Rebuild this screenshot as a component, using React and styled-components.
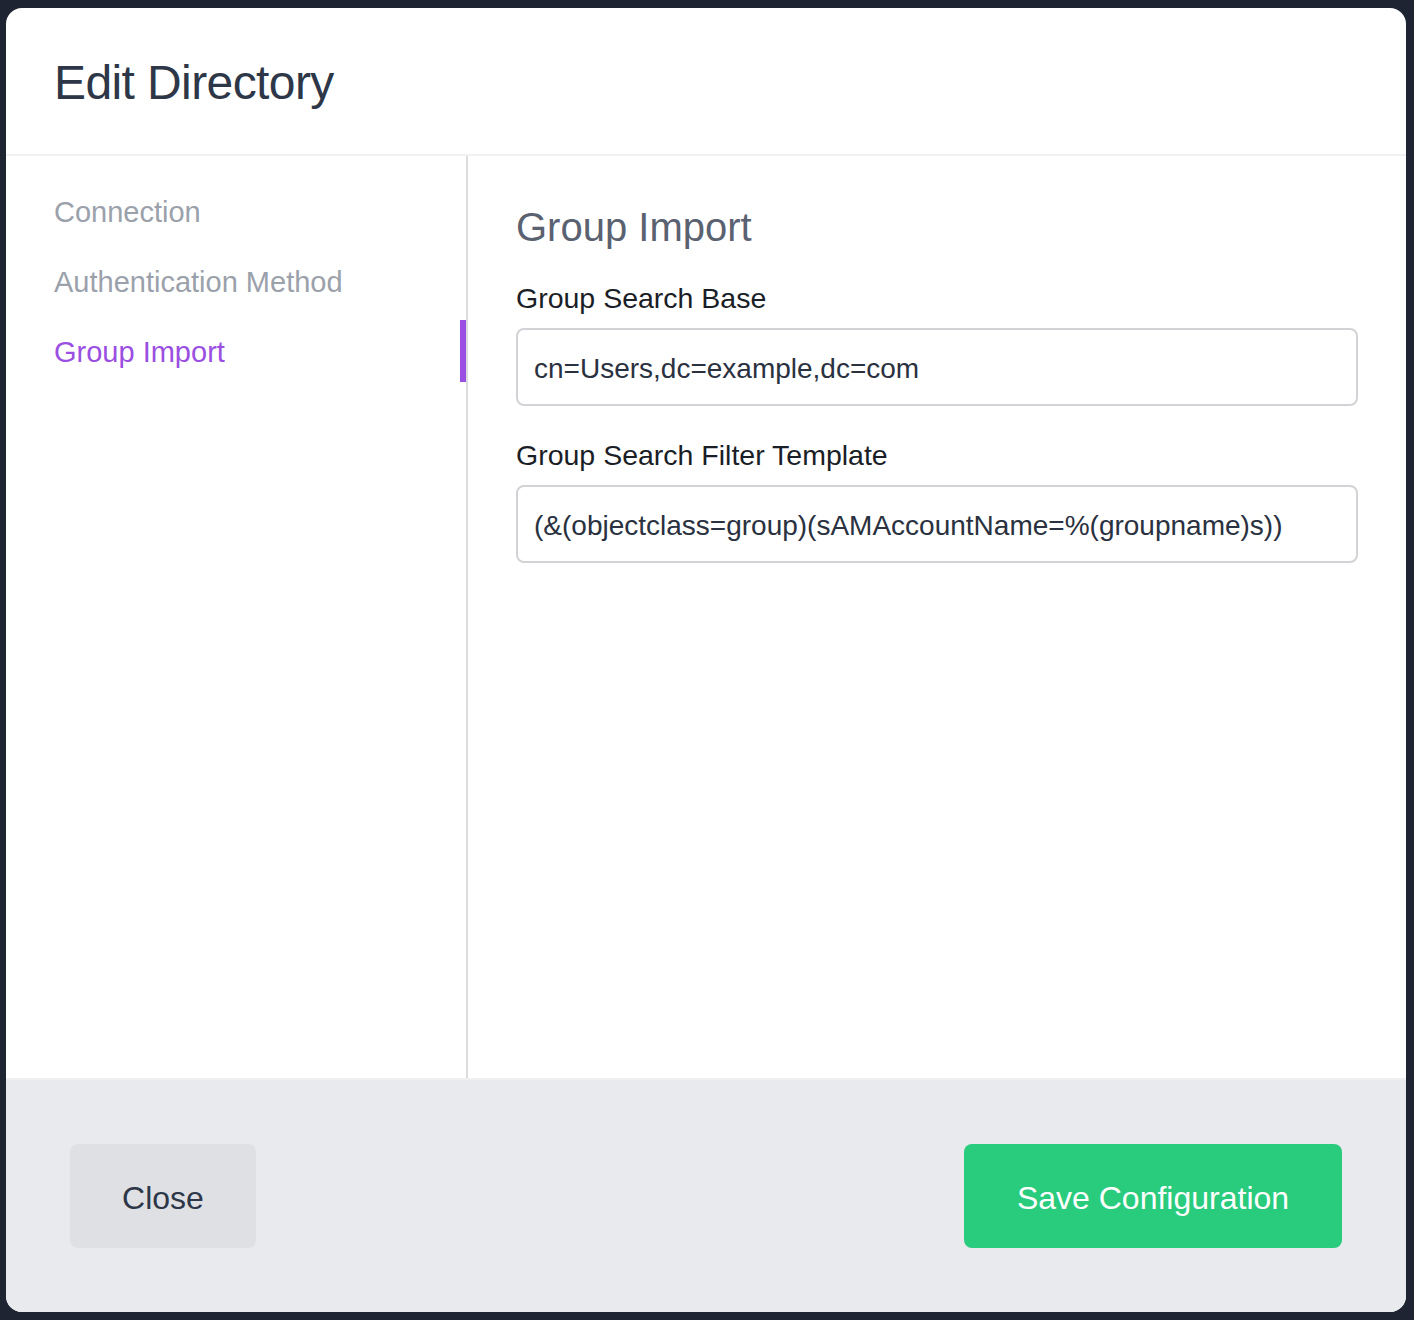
import React, { useState } from 'react';
import styled, { createGlobalStyle } from 'styled-components';

const GlobalStyle = createGlobalStyle`
  html, body {
    margin: 0;
    padding: 0;
    background: #1f2433;
  }
  body {
    font-family: "Liberation Sans", Arial, sans-serif;
    -webkit-font-smoothing: antialiased;
  }
`;

const Page = styled.div`
  width: 1414px;
  height: 1320px;
  padding: 8px 8px 8px 6px;
  box-sizing: border-box;
`;

const Modal = styled.div`
  width: 1400px;
  height: 1304px;
  background: #fff;
  border-radius: 16px;
  overflow: hidden;
  display: flex;
  flex-direction: column;
`;

const Header = styled.div`
  height: 148px;
  border-bottom: 2px solid #f1f1f3;
  display: flex;
  align-items: center;
  padding-left: 48px;
  padding-top: 2px;
  box-sizing: border-box;
`;

const Title = styled.h1`
  margin: 0;
  font-size: 48px;
  font-weight: 400;
  color: #2d3748;
  letter-spacing: -0.6px;
`;

const Body = styled.div`
  flex: 1;
  display: flex;
  min-height: 0;
`;

const Sidebar = styled.nav`
  width: 460px;
  border-right: 2px solid #dcdcdf;
  padding-top: 24px;
  display: flex;
  flex-direction: column;
  gap: 8px;
`;

const NavItem = styled.a`
  position: relative;
  height: 62px;
  display: flex;
  align-items: center;
  padding-left: 48px;
  padding-top: 3px;
  box-sizing: border-box;
  font-size: 29px;
  color: ${(p) => (p.$active ? '#9a4fe2' : '#9ba1ab')};
  cursor: pointer;

  &::after {
    content: '';
    display: ${(p) => (p.$active ? 'block' : 'none')};
    position: absolute;
    right: 0;
    top: 0;
    bottom: 0;
    width: 6px;
    background: #9a4fe2;
  }
`;

const Content = styled.section`
  flex: 1;
  padding: 48px 48px 0 48px;
`;

const SectionTitle = styled.h2`
  margin: 0 0 32px;
  font-size: 40px;
  line-height: 46px;
  font-weight: 400;
  color: #5a6170;
`;

const Field = styled.div`
  display: flex;
  flex-direction: column;
  gap: 13px;
  margin-bottom: 33px;
`;

const Label = styled.label`
  font-size: 28.5px;
  line-height: 33px;
  color: #1a1e27;
`;

const Input = styled.input`
  height: 78px;
  box-sizing: border-box;
  border: 2px solid #d2d3d6;
  border-radius: 8px;
  padding: 3px 16px 0;
  font-family: "Liberation Sans", Arial, sans-serif;
  font-size: 28px;
  color: #2a3140;
  outline: none;
  background: #fff;
`;

const Footer = styled.div`
  height: 234px;
  background: #e9eaed;
  border-top: 2px solid #f0f0f2;
  box-sizing: border-box;
  display: flex;
  align-items: center;
  justify-content: space-between;
  padding: 0 64px;
`;

const Button = styled.button`
  height: 104px;
  padding: 4px 40px 0;
  border: none;
  border-radius: 8px;
  font-family: "Liberation Sans", Arial, sans-serif;
  font-size: 32px;
  cursor: pointer;
  background: ${(p) => (p.$primary ? '#29cb7d' : '#dfe0e4')};
  color: ${(p) => (p.$primary ? '#fff' : '#2d3748')};
  min-width: ${(p) => (p.$primary ? '378px' : '186px')};
`;

const sections = ['Connection', 'Authentication Method', 'Group Import'];

export default function App() {
  const [active, setActive] = useState('Group Import');
  return (
    <>
      <GlobalStyle />
      <Page>
        <Modal>
          <Header>
            <Title>Edit Directory</Title>
          </Header>
          <Body>
            <Sidebar>
              {sections.map((s) => (
                <NavItem key={s} $active={s === active} onClick={() => setActive(s)}>
                  {s}
                </NavItem>
              ))}
            </Sidebar>
            <Content>
              <SectionTitle>Group Import</SectionTitle>
              <Field>
                <Label>Group Search Base</Label>
                <Input defaultValue="cn=Users,dc=example,dc=com" />
              </Field>
              <Field>
                <Label>Group Search Filter Template</Label>
                <Input defaultValue="(&(objectclass=group)(sAMAccountName=%(groupname)s))" />
              </Field>
            </Content>
          </Body>
          <Footer>
            <Button>Close</Button>
            <Button $primary>Save Configuration</Button>
          </Footer>
        </Modal>
      </Page>
    </>
  );
}
